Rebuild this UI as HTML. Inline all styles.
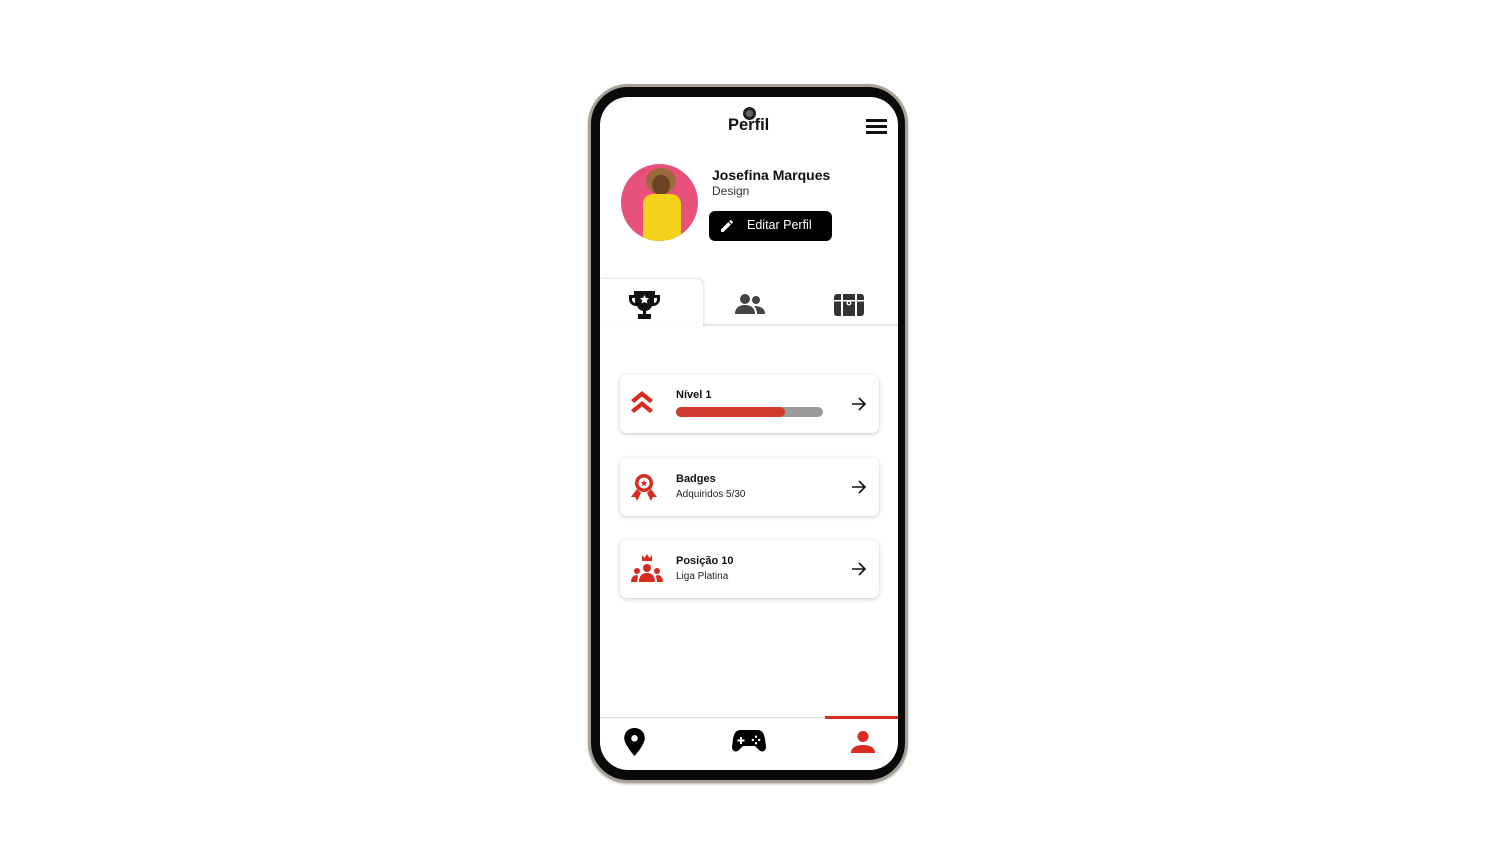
<!DOCTYPE html>
<html><head><meta charset="utf-8"><style>
*{margin:0;padding:0;box-sizing:border-box}
body{width:1504px;height:867px;background:#fff;position:relative;overflow:hidden;font-family:"Liberation Sans",sans-serif;color:#111}
.phone{position:absolute;left:588px;top:84px;width:320px;height:699px;border-radius:40px;background:#0a0a0a;border:3px solid #a9a196;box-shadow:0 1px 2px rgba(0,0,0,.3)}
.screen{position:absolute;left:600px;top:97px;width:298px;height:673px;border-radius:28px;background:#fff;overflow:hidden}
.abs{position:absolute}
.card{position:absolute;left:20px;width:259px;height:58px;background:#fff;border-radius:7px;box-shadow:0 1px 4px rgba(0,0,0,.22)}
.card .t{position:absolute;left:56px;font-size:11px;font-weight:bold}
.card .s{position:absolute;left:56px;font-size:10px;color:#222}
.arrow{position:absolute;right:12px;top:21px}
</style></head><body>
<div class="phone"></div>
<div class="screen">
  <div class="abs" style="left:143px;top:10px;width:13px;height:13px;border-radius:50%;background:#222"><div style="margin:3px;width:7px;height:7px;border-radius:50%;background:#666"></div></div>
  <div class="abs" style="left:128px;top:19px;font-size:16.5px;font-weight:bold">Perfil</div>
  <div class="abs" style="left:266px;top:22px;width:21px;height:3px;background:#111;box-shadow:0 6px 0 #111,0 12px 0 #111"></div>
  <div class="abs" style="left:21px;top:67px;width:77px;height:77px;border-radius:50%;background:#e8527a;overflow:hidden">
    <div class="abs" style="left:25px;top:4px;width:30px;height:26px;border-radius:50%;background:#9a6a3a"></div>
    <div class="abs" style="left:31px;top:11px;width:18px;height:20px;border-radius:50%;background:#6b4224"></div>
    <div class="abs" style="left:22px;top:30px;width:38px;height:50px;border-radius:10px 10px 0 0;background:#f3d21a"></div>
  </div>
  <div class="abs" style="left:112px;top:70px;font-size:14px;font-weight:bold">Josefina Marques</div>
  <div class="abs" style="left:112px;top:87px;font-size:12px;color:#333">Design</div>
  <div class="abs" style="left:109px;top:114px;width:123px;height:30px;border-radius:6px;background:#000;color:#fff;font-size:12.5px">
    <svg class="abs" style="left:10px;top:7px" width="16" height="16" viewBox="0 0 24 24"><path fill="#fff" d="M3 17.25V21h3.75L17.8 9.94l-3.75-3.75L3 17.25zM20.7 7.04a1 1 0 000-1.41l-2.34-2.34a1 1 0 00-1.41 0l-1.83 1.83 3.75 3.75 1.83-1.83z"/></svg>
    <span class="abs" style="left:38px;top:7px">Editar Perfil</span>
  </div>
  <div class="abs" style="left:0;top:227px;width:298px;height:2px;background:#e6e6e6"></div>
  <div class="abs" style="left:0;top:182px;width:103px;height:48px;background:#fff;border-radius:0 7px 0 0;box-shadow:1px -1px 3px rgba(0,0,0,.12)"></div>
  <svg class="abs" style="left:28px;top:192px" width="33" height="31" viewBox="0 0 33 31"><path fill="#111" d="M6 2h21v4h5v4a7 7 0 01-7 7h-1a8 8 0 01-6 5v3h5v5H10v-5h5v-3a8 8 0 01-6-5H8a7 7 0 01-7-7V6h5zM4 9v1a4 4 0 003 4V9zm25 0h-3v5a4 4 0 003-4z"/><path fill="#fff" d="M16.5 6l1.4 2.9 3.1.4-2.3 2.1.6 3.1-2.8-1.5-2.8 1.5.6-3.1-2.3-2.1 3.1-.4z"/></svg>
  <svg class="abs" style="left:135px;top:196px" width="30" height="22" viewBox="0 0 30 22"><circle cx="10" cy="6" r="5" fill="#444"/><circle cx="21" cy="7" r="4" fill="#444"/><path fill="#444" d="M0 21c0-6 4-9 10-9s10 3 10 9zM19 13c6 0 11 2 11 8h-8c0-3-1-6-3-8z"/></svg>
  <svg class="abs" style="left:234px;top:197px" width="30" height="22" viewBox="0 0 30 22"><rect x="0" y="0" width="30" height="22" rx="3" fill="#333"/><rect x="7" y="0" width="2" height="22" fill="#fff"/><rect x="21" y="0" width="2" height="22" fill="#fff"/><rect x="0" y="6" width="30" height="1.5" fill="#fff"/><circle cx="15" cy="9" r="2.5" fill="#fff"/><circle cx="15" cy="9" r="1.2" fill="#333"/></svg>

  <div class="card" style="top:278px">
    <svg class="abs" style="left:10px;top:15px" width="24" height="24" viewBox="0 0 24 24"><path fill="#d72b20" d="M12 1L1 10l3 3 8-6.5 8 6.5 3-3zM12 11L1 20l3 3 8-6.5 8 6.5 3-3z"/></svg>
    <div class="t" style="top:14px">Nível 1</div>
    <div class="abs" style="left:56px;top:32px;width:147px;height:10px;border-radius:5px;background:#9b9b9b"><div style="width:109px;height:10px;border-radius:5px;background:#d33a2f"></div></div>
    <svg class="arrow" width="16" height="16" viewBox="0 0 16 16"><path d="M1 8h13M8 2l6 6-6 6" stroke="#111" stroke-width="1.6" fill="none"/></svg>
  </div>
  <div class="card" style="top:361px">
    <svg class="abs" style="left:9px;top:14px" width="30" height="30" viewBox="0 0 30 30"><circle cx="15" cy="11" r="9" fill="#d72b20"/><circle cx="15" cy="11" r="5.5" fill="#fff"/><path fill="#d72b20" d="M15 8l1 2 2.2.3-1.6 1.5.4 2.2-2-1-2 1 .4-2.2-1.6-1.5 2.2-.3z"/><path fill="#d72b20" d="M8 17l-6 8h4l2 4 4-8zM22 17l6 8h-4l-2 4-4-8z"/></svg>
    <div class="t" style="top:15px">Badges</div>
    <div class="s" style="top:31px">Adquiridos 5/30</div>
    <svg class="arrow" width="16" height="16" viewBox="0 0 16 16"><path d="M1 8h13M8 2l6 6-6 6" stroke="#111" stroke-width="1.6" fill="none"/></svg>
  </div>
  <div class="card" style="top:443px">
    <svg class="abs" style="left:11px;top:14px" width="32" height="30" viewBox="0 0 32 30"><path fill="#d72b20" d="M11 1l2.5 3L16 0l2.5 4L21 1v6H11z"/><circle cx="16" cy="14" r="4" fill="#d72b20"/><circle cx="6" cy="17" r="3" fill="#d72b20"/><circle cx="26" cy="17" r="3" fill="#d72b20"/><path fill="#d72b20" d="M8 28c0-6 3-9 8-9s8 3 8 9zM0 28c0-4 2-7 6-7l1 1-1 6zM32 28c0-4-2-7-6-7l-1 1 1 6z"/></svg>
    <div class="t" style="top:15px">Posição 10</div>
    <div class="s" style="top:31px">Liga Platina</div>
    <svg class="arrow" width="16" height="16" viewBox="0 0 16 16"><path d="M1 8h13M8 2l6 6-6 6" stroke="#111" stroke-width="1.6" fill="none"/></svg>
  </div>

  <div class="abs" style="left:0;top:620px;width:298px;height:1px;background:#ddd"></div>
  <div class="abs" style="left:225px;top:619px;width:73px;height:3px;background:#d72b20"></div>
  <svg class="abs" style="left:23px;top:631px" width="23" height="28" viewBox="0 0 24 30"><path fill="#000" d="M12 0C5.4 0 1 4.8 1 11c0 7 11 19 11 19s11-12 11-19C23 4.8 18.6 0 12 0z"/><circle cx="12" cy="11" r="3.5" fill="#fff"/></svg>
  <svg class="abs" style="left:132px;top:632px" width="34" height="24" viewBox="0 0 34 24"><path fill="#000" d="M9 1h16c5 0 7 3 8 9l1 8c0 4-4 6-7 3l-4-4H11l-4 4c-3 3-7 1-7-3l1-8C2 4 4 1 9 1z"/><path fill="#fff" d="M8 8h2v2.5h2.5v2H10V15H8v-2.5H5.5v-2H8zM24 6.5a1.2 1.2 0 110 2.4 1.2 1.2 0 010-2.4zM24 13a1.2 1.2 0 110 2.4 1.2 1.2 0 010-2.4zM20.8 9.8a1.2 1.2 0 110 2.4 1.2 1.2 0 010-2.4zM27.2 9.8a1.2 1.2 0 110 2.4 1.2 1.2 0 010-2.4z"/></svg>
  <svg class="abs" style="left:251px;top:633px" width="24" height="24" viewBox="0 0 24 24"><circle cx="12" cy="6.5" r="5.5" fill="#d72b20"/><path fill="#d72b20" d="M0 23c0-6 6-8 12-8s12 2 12 8z"/></svg>
</div>
</body></html>
